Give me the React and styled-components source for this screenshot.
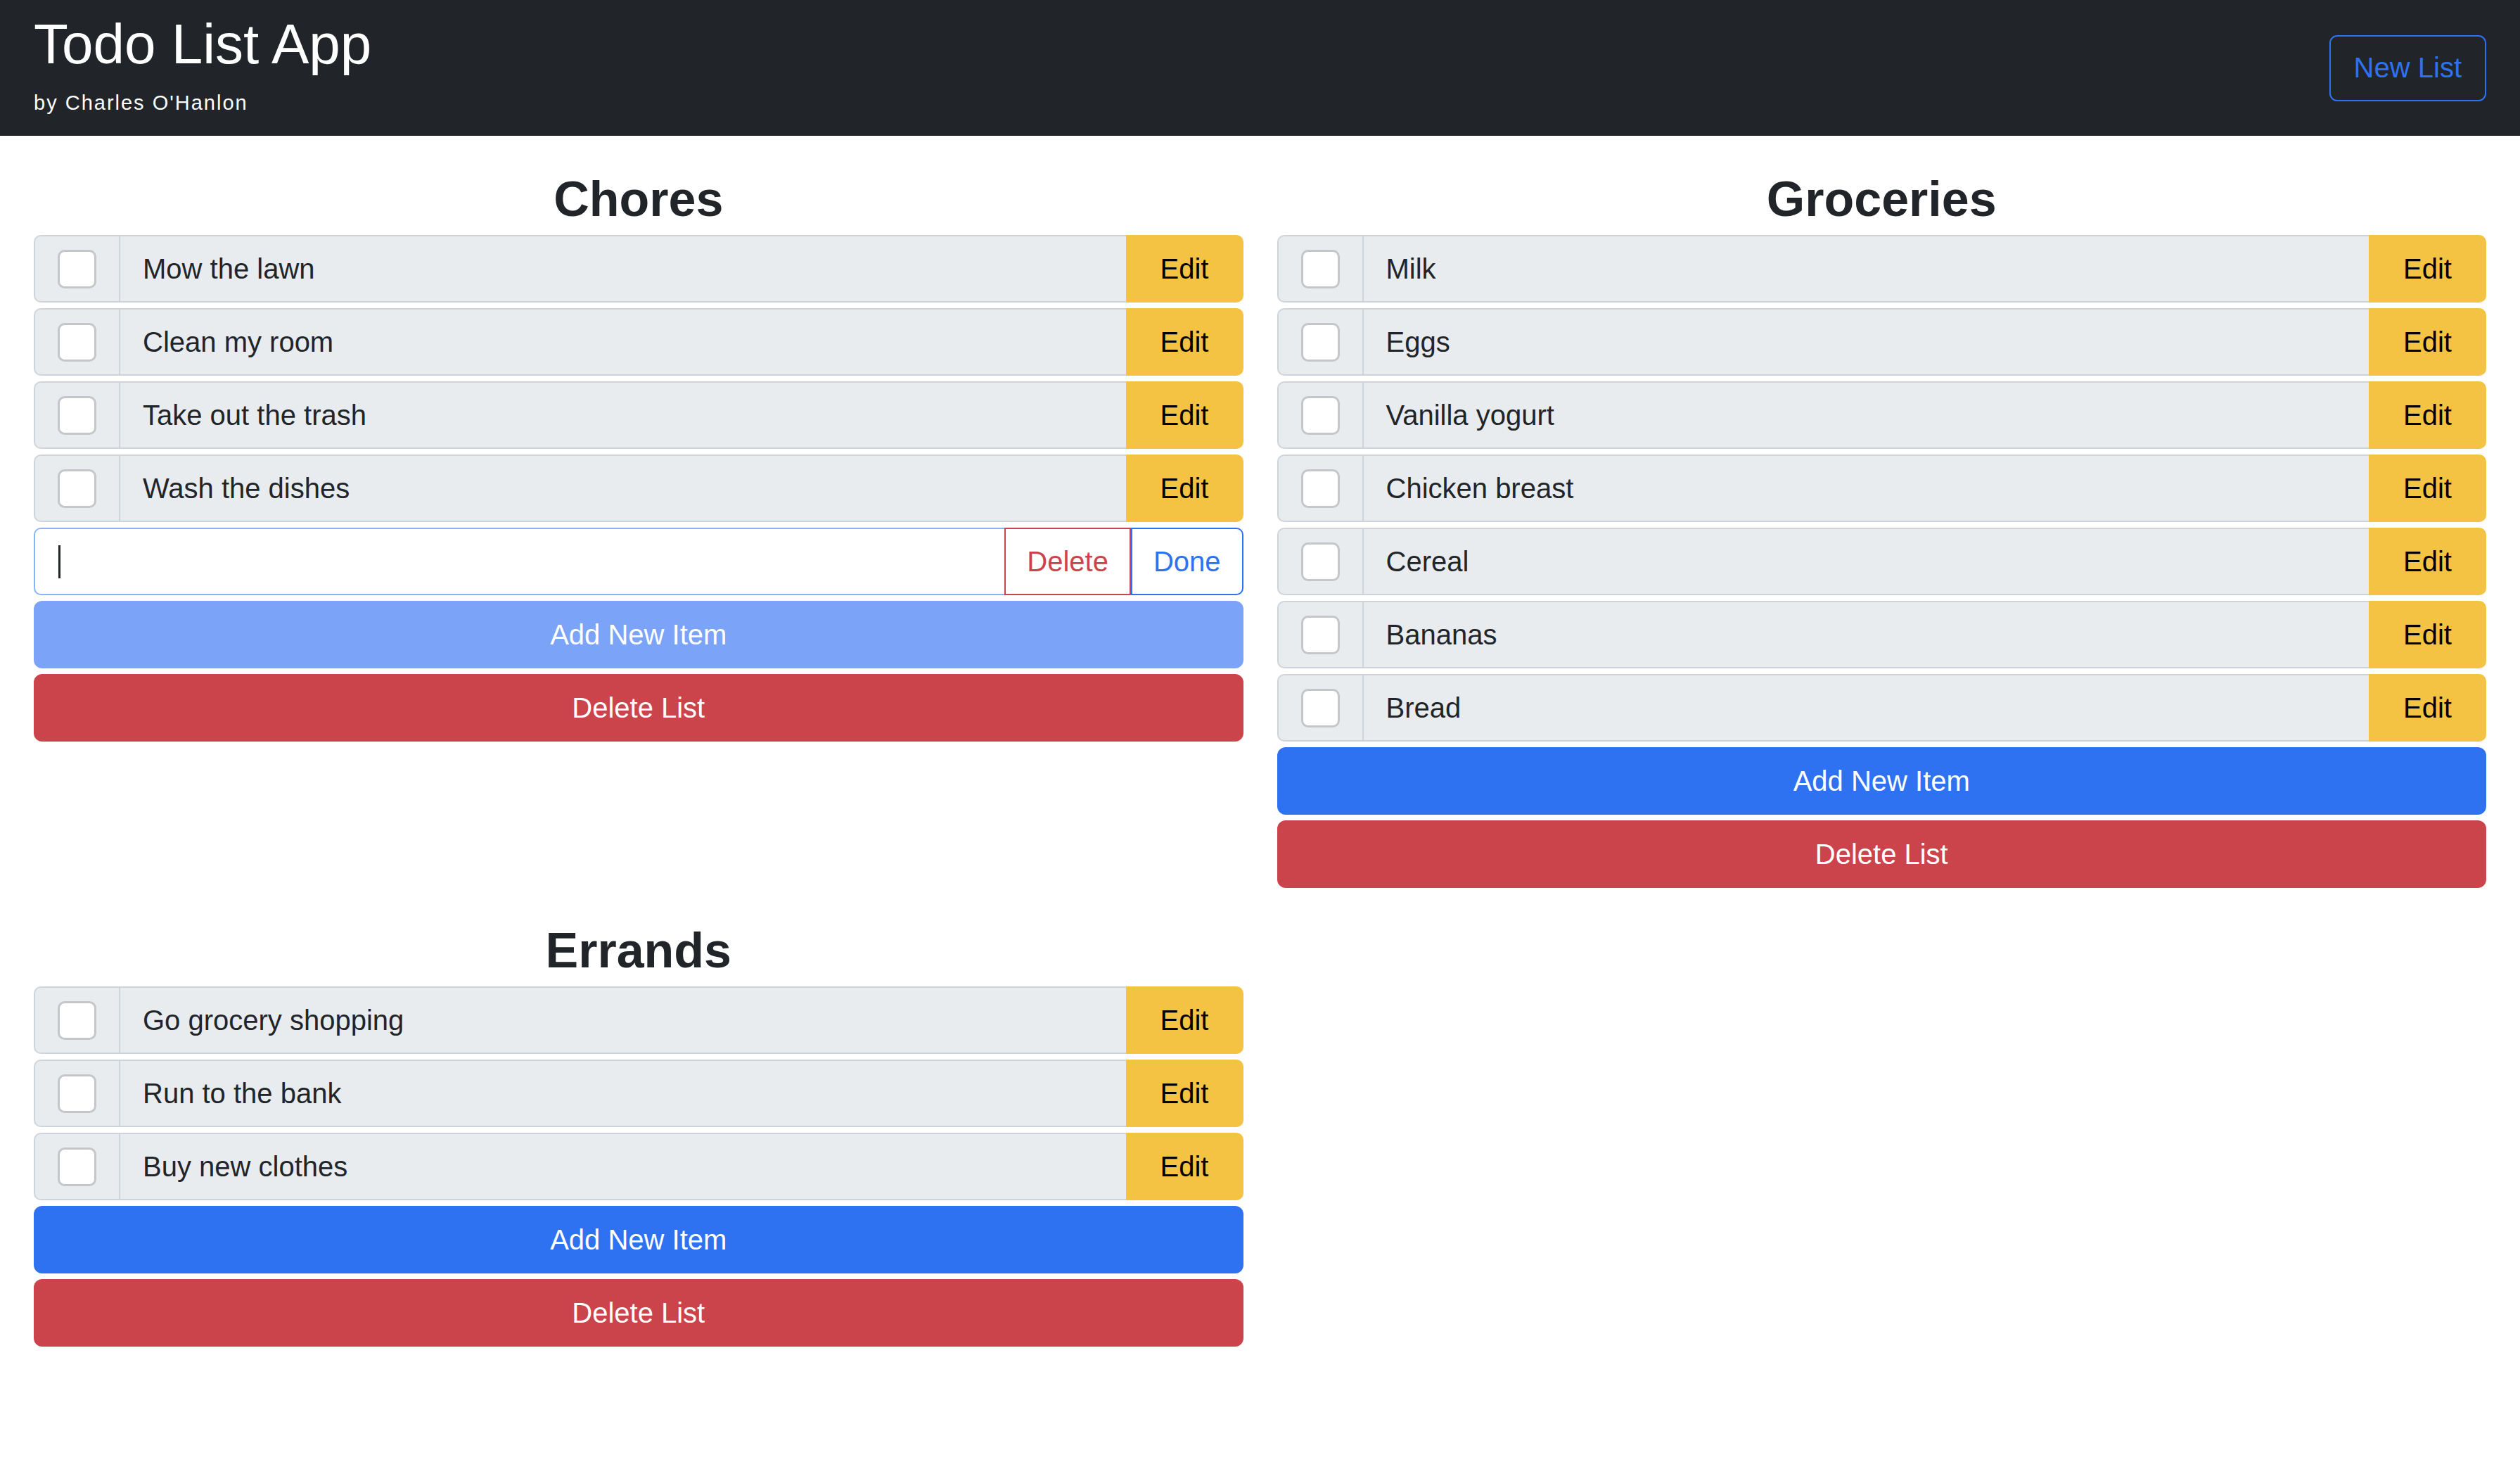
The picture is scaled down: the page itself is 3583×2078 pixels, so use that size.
import React from "react";
import styled, { createGlobalStyle } from "styled-components";

const GlobalStyle = createGlobalStyle`
  html, body { margin: 0; padding: 0; background: #ffffff; }
  body {
    font-family: "Liberation Sans", Arial, sans-serif;
    color: #212529;
  }
  * { box-sizing: border-box; }
`;

const Navbar = styled.header`
  height: 193px;
  background: #212529;
  display: flex;
  align-items: center;
  justify-content: space-between;
  padding: 0 48px;
`;

const Brand = styled.div`
  display: flex;
  flex-direction: column;
  padding: 15px 0 27px;
`;

const AppTitle = styled.h1`
  margin: 0 0 14px;
  font-size: 80px;
  line-height: 1.2;
  font-weight: 400;
  color: #ffffff;
`;

const Byline = styled.div`
  font-size: 29px;
  line-height: 42px;
  letter-spacing: 2px;
  color: #ffffff;
`;

const OutlineButton = styled.button`
  height: 94px;
  padding: 0 33px;
  background: transparent;
  border: 2px solid #2f72f1;
  border-radius: 11px;
  color: #2f72f1;
  font-family: inherit;
  font-size: 40px;
  cursor: pointer;
`;

const Main = styled.main`
  display: grid;
  grid-template-columns: 1fr 1fr;
  column-gap: 48px;
  row-gap: 47px;
  align-items: start;
  padding: 48px;
`;

const ListCard = styled.section`
  display: flex;
  flex-direction: column;
  gap: 8px;
`;

const ListTitle = styled.h2`
  margin: 0 0 1px;
  font-size: 70px;
  line-height: 84px;
  font-weight: 700;
  text-align: center;
  color: #212529;
`;

const ItemRow = styled.div`
  display: flex;
  height: 96px;
`;

const CheckCell = styled.div`
  display: flex;
  align-items: center;
  padding: 0 32px;
  background: #e9ecef;
  border: 2px solid #ced4da;
  border-radius: 10px 0 0 10px;
`;

const CheckBox = styled.span`
  display: block;
  width: 55px;
  height: 55px;
  background: #ffffff;
  border: 3px solid #c4c6c9;
  border-radius: 10px;
`;

const ItemText = styled.div`
  flex: 1;
  display: flex;
  align-items: center;
  padding-left: 32px;
  background: #e9ecef;
  border-top: 2px solid #ced4da;
  border-bottom: 2px solid #ced4da;
  font-size: 40px;
  color: #212529;
`;

const EditButton = styled.button`
  width: 167px;
  border: none;
  border-radius: 0 10px 10px 0;
  background: #f5c343;
  color: #000000;
  font-family: inherit;
  font-size: 40px;
  cursor: pointer;
`;

const EditField = styled.label`
  flex: 1;
  display: flex;
  align-items: center;
  padding-left: 33px;
  background: #ffffff;
  border: 2px solid #8ab4f8;
  border-right: none;
  border-radius: 10px 0 0 10px;
`;

const Caret = styled.span`
  display: block;
  width: 3px;
  height: 47px;
  background: #212529;
`;

const TextInput = styled.input`
  flex: 1;
  border: none;
  outline: none;
  background: transparent;
  caret-color: transparent;
  font-family: inherit;
  font-size: 40px;
  color: #212529;
`;

const GroupButton = styled.button`
  padding: 0 30px;
  background: #ffffff;
  border: 2px solid ${(p) => p.$tone};
  border-radius: ${(p) => (p.$last ? "0 10px 10px 0" : "0")};
  color: ${(p) => p.$tone};
  font-family: inherit;
  font-size: 40px;
  cursor: pointer;
`;

const BLOCK_COLORS = {
  primary: "#2f72f1",
  disabled: "#7ba3f7",
  danger: "#cc444b",
};

const BlockButton = styled.button`
  width: 100%;
  height: 96px;
  border: none;
  border-radius: 12px;
  background: ${(p) => BLOCK_COLORS[p.$variant]};
  color: #ffffff;
  font-family: inherit;
  font-size: 40px;
  cursor: pointer;
`;

const lists = [
  {
    title: "Chores",
    items: ["Mow the lawn", "Clean my room", "Take out the trash", "Wash the dishes"],
    editing: true,
  },
  {
    title: "Groceries",
    items: ["Milk", "Eggs", "Vanilla yogurt", "Chicken breast", "Cereal", "Bananas", "Bread"],
    editing: false,
  },
  {
    title: "Errands",
    items: ["Go grocery shopping", "Run to the bank", "Buy new clothes"],
    editing: false,
  },
];

function TodoList({ title, items, editing }) {
  return (
    <ListCard>
      <ListTitle>{title}</ListTitle>
      {items.map((item) => (
        <ItemRow key={item}>
          <CheckCell>
            <CheckBox />
          </CheckCell>
          <ItemText>{item}</ItemText>
          <EditButton>Edit</EditButton>
        </ItemRow>
      ))}
      {editing && (
        <ItemRow>
          <EditField>
            <Caret />
            <TextInput type="text" aria-label="New item" />
          </EditField>
          <GroupButton $tone="#cc444b">Delete</GroupButton>
          <GroupButton $tone="#2f72f1" $last>
            Done
          </GroupButton>
        </ItemRow>
      )}
      <BlockButton $variant={editing ? "disabled" : "primary"}>Add New Item</BlockButton>
      <BlockButton $variant="danger">Delete List</BlockButton>
    </ListCard>
  );
}

export default function App() {
  return (
    <>
      <GlobalStyle />
      <Navbar>
        <Brand>
          <AppTitle>Todo List App</AppTitle>
          <Byline>by Charles O'Hanlon</Byline>
        </Brand>
        <OutlineButton>New List</OutlineButton>
      </Navbar>
      <Main>
        {lists.map((l) => (
          <TodoList key={l.title} {...l} />
        ))}
      </Main>
    </>
  );
}
